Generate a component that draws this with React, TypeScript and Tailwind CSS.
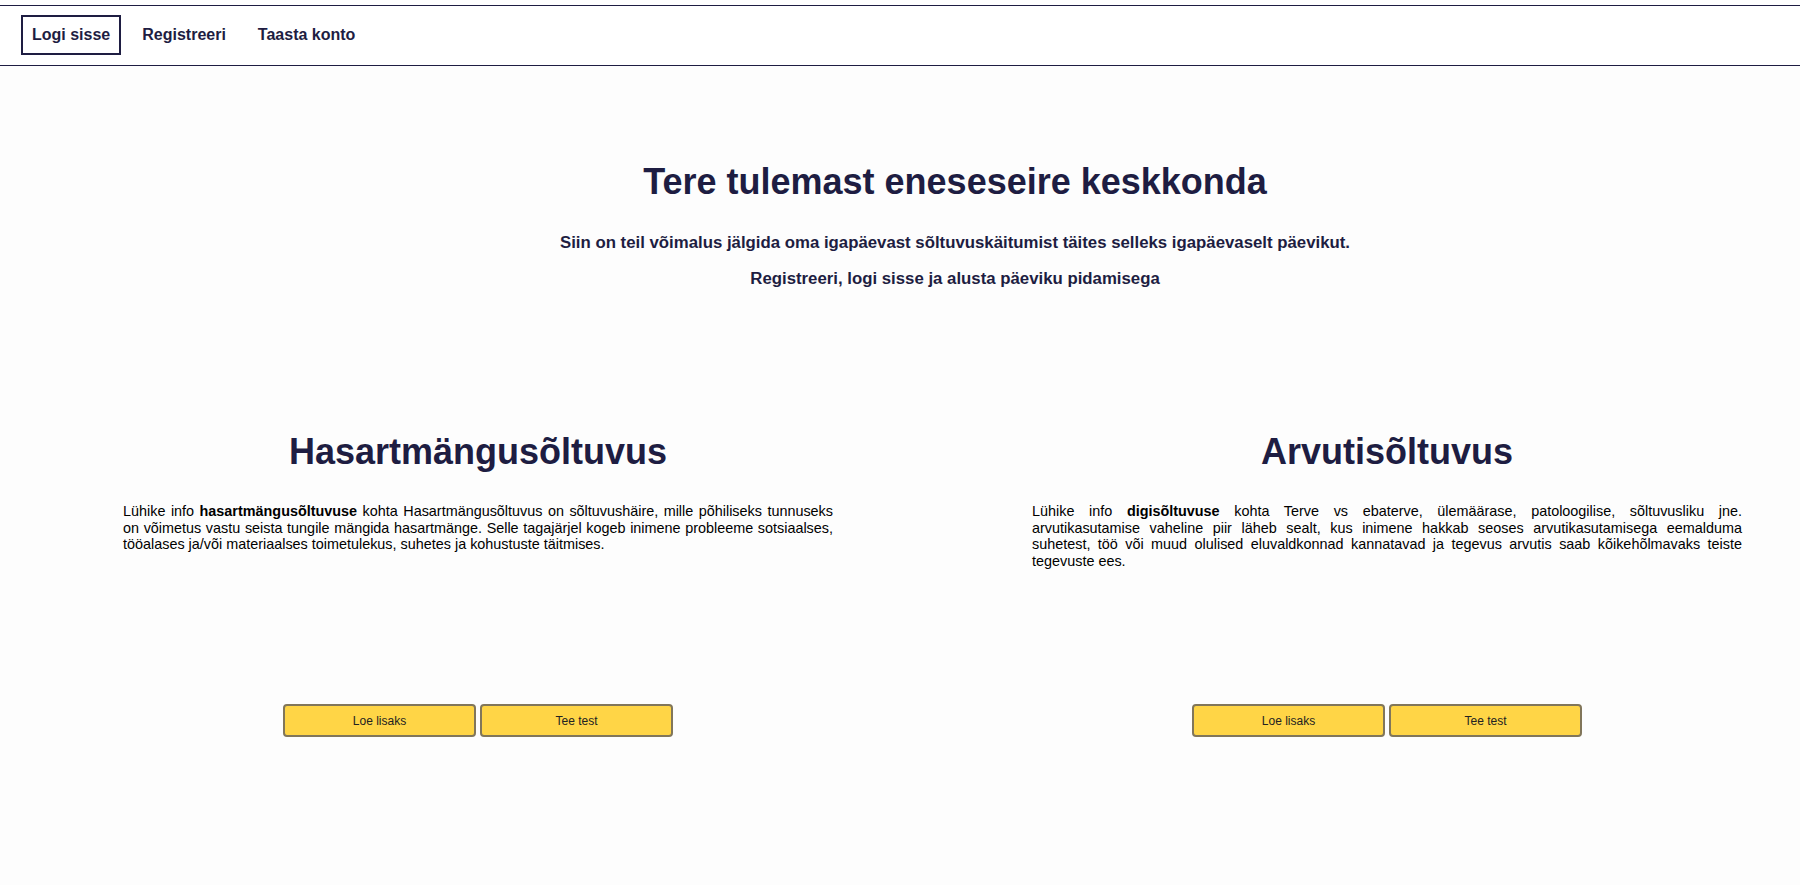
import React from "react";

const navy = "text-[#1e1d42]";

function Buttons() {
  return (
    <div className="flex justify-center gap-[4px]">
      <button className="w-[193px] h-[33px] bg-[#ffd546] border-2 border-[#81765a] rounded-[4px] text-[12px] text-[#222]">
        Loe lisaks
      </button>
      <button className="w-[193px] h-[33px] bg-[#ffd546] border-2 border-[#81765a] rounded-[4px] text-[12px] text-[#222]">
        Tee test
      </button>
    </div>
  );
}

export default function App() {
  return (
    <div
      className="min-h-[885px] bg-[#fdfdfd]"
      style={{ fontFamily: '"Liberation Sans", Arial, sans-serif' }}
    >
      <div className="bg-white pt-[5px]">
        <nav className="h-[61px] border-y border-[#1e1d42] flex items-center pl-[21px] gap-[10px] pb-[1px]">
          <a className={`border-2 border-[#1e1d42] px-[9px] py-[9px] text-[16px] font-bold leading-[18px] ${navy}`}>
            Logi sisse
          </a>
          <a className={`border-2 border-transparent px-[9px] py-[9px] text-[16px] font-bold leading-[18px] ${navy}`}>
            Registreeri
          </a>
          <a className={`border-2 border-transparent px-[9px] py-[9px] text-[16px] font-bold leading-[18px] ${navy}`}>
            Taasta konto
          </a>
        </nav>
      </div>

      <section className="pl-[110px] pt-[95px] text-center">
        <h1 className={`text-[36px] font-bold leading-[41px] ${navy}`}>
          Tere tulemast eneseseire keskkonda
        </h1>
        <p className={`mt-[32px] text-[16.8px] font-bold leading-[18px] ${navy}`}>
          Siin on teil võimalus jälgida oma igapäevast sõltuvuskäitumist täites selleks igapäevaselt päevikut.
        </p>
        <p className={`mt-[18px] text-[16.8px] font-bold leading-[18px] ${navy}`}>
          Registreeri, logi sisse ja alusta päeviku pidamisega
        </p>
      </section>

      <section className="flex pl-[123px] gap-[199px] mt-[143px]">
        <div className="w-[710px]">
          <h2 className={`text-center text-[36px] font-bold leading-[41px] ${navy}`}>
            Hasartmängusõltuvus
          </h2>
          <div className="h-[232px] pt-[31px]">
            <p className="text-justify text-[14.4px] leading-[16.7px] text-black">
              Lühike info <b>hasartmängusõltuvuse</b> kohta Hasartmängusõltuvus on sõltuvushäire, mille põhiliseks tunnuseks on võimetus vastu seista tungile mängida hasartmänge. Selle tagajärjel kogeb inimene probleeme sotsiaalses, tööalases ja/või materiaalses toimetulekus, suhetes ja kohustuste täitmises.
            </p>
          </div>
          <Buttons />
        </div>
        <div className="w-[710px]">
          <h2 className={`text-center text-[36px] font-bold leading-[41px] ${navy}`}>
            Arvutisõltuvus
          </h2>
          <div className="h-[232px] pt-[31px]">
            <p className="text-justify text-[14.4px] leading-[16.7px] text-black">
              Lühike info <b>digisõltuvuse</b> kohta Terve vs ebaterve, ülemäärase, patoloogilise, sõltuvusliku jne. arvutikasutamise vaheline piir läheb sealt, kus inimene hakkab seoses arvutikasutamisega eemalduma suhetest, töö või muud olulised eluvaldkonnad kannatavad ja tegevus arvutis saab kõikehõlmavaks teiste tegevuste ees.
            </p>
          </div>
          <Buttons />
        </div>
      </section>
    </div>
  );
}
